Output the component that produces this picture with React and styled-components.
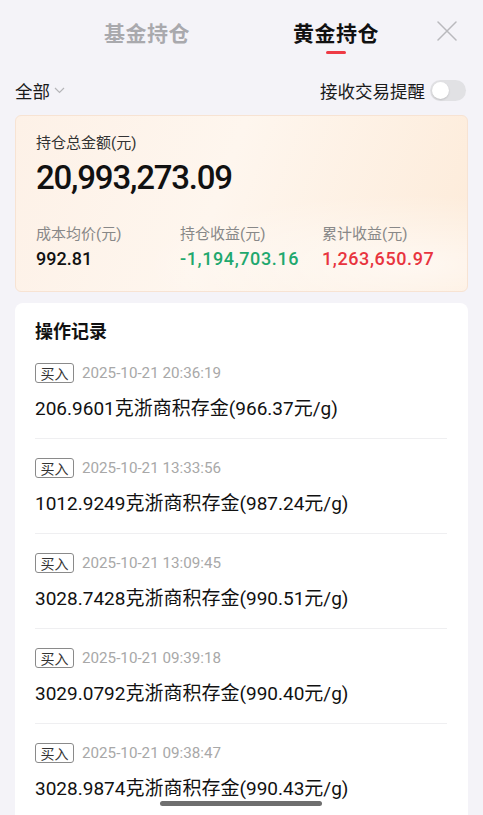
import React from "react";
import styled, { createGlobalStyle } from "styled-components";

const GlobalStyle = createGlobalStyle`
  html, body {
    margin: 0;
    padding: 0;
    background: #f4f3f8;
    font-family: Roboto, "Noto Sans CJK SC", "Noto Sans", sans-serif;
  }
`;

const Page = styled.div`
  width: 483px;
  height: 815px;
  overflow: hidden;
  position: relative;
  background: #f4f3f8;
  box-sizing: border-box;
  padding: 0 15px;
`;

const TabBar = styled.div`
  height: 66px;
  display: flex;
  justify-content: center;
  align-items: flex-start;
  padding-top: 19px;
  box-sizing: border-box;
  position: relative;
`;

const Tab = styled.div`
  width: 189px;
  display: flex;
  flex-direction: column;
  align-items: center;
  font-size: 21px;
  line-height: 30px;
  font-weight: 700;
  letter-spacing: 0.5px;
  color: ${(p) => (p.$active ? "#111" : "#a9a9ad")};

  &::after {
    content: "";
    width: 20px;
    height: 3px;
    margin-top: 2px;
    border-radius: 2px;
    background: ${(p) => (p.$active ? "#ee3a45" : "transparent")};
  }
`;

const Close = styled.div`
  position: absolute;
  right: 11px;
  top: 21px;
  width: 20px;
  height: 20px;
`;

const FilterRow = styled.div`
  height: 49px;
  display: flex;
  align-items: center;
  justify-content: space-between;
`;

const Select = styled.div`
  display: flex;
  align-items: center;
  gap: 4px;
  font-size: 17.5px;
  color: #1a1a1a;
`;

const Remind = styled.div`
  display: flex;
  align-items: center;
  gap: 5px;
  font-size: 17.5px;
  color: #1a1a1a;
  margin-right: 2px;
`;

const Toggle = styled.div`
  width: 36px;
  height: 21px;
  border-radius: 11px;
  background: #e1e1e4;
  position: relative;

  &::after {
    content: "";
    position: absolute;
    left: 2px;
    top: 2px;
    width: 17px;
    height: 17px;
    border-radius: 50%;
    background: #fff;
    box-shadow: 0 1px 2px rgba(0, 0, 0, 0.15);
  }
`;

const SummaryCard = styled.div`
  height: 177px;
  box-sizing: border-box;
  border-radius: 6px;
  border: 1px solid #f7e3d3;
  background:
    radial-gradient(ellipse 60% 40% at 88% 85%, rgba(255, 255, 255, 0.6) 0%, rgba(255, 255, 255, 0) 100%),
    linear-gradient(110deg, #fdf1e7 0%, #fef6ee 45%, #fdebd9 100%);
  padding: 17px 20px 0;
`;

const SmallLabel = styled.div`
  font-size: 15px;
  color: ${(p) => (p.$muted ? "#888" : "#333")};
  line-height: 20px;
`;

const BigAmount = styled.div`
  font-size: 33px;
  font-weight: 500;
  color: #111;
  letter-spacing: -1.2px;
  line-height: 40px;
  margin-top: 5px;
`;

const StatsRow = styled.div`
  display: grid;
  grid-template-columns: 144px 142px 1fr;
  margin-top: 26px;
`;

const Stat = styled.div`
  display: flex;
  flex-direction: column;
  gap: 3px;
`;

const StatValue = styled.div`
  font-size: 18px;
  font-weight: 500;
  line-height: 24px;
  letter-spacing: ${(p) => (p.$tight ? "0.6px" : "0")};
  color: ${(p) => p.$color || "#111"};
`;

const RecordsCard = styled.div`
  margin-top: 11px;
  background: #fff;
  border-radius: 8px 8px 0 0;
  padding: 17px 20px 0;
  height: 520px;
  box-sizing: border-box;
`;

const RecordsTitle = styled.div`
  font-size: 18px;
  font-weight: 700;
  color: #111;
  line-height: 24px;
`;

const Record = styled.div`
  padding: 18.5px 0 16.5px;
  border-bottom: 1px solid #efeff1;
  margin-right: 1px;
  &:first-of-type {
    padding-top: 17px;
  }
`;

const MetaLine = styled.div`
  display: flex;
  align-items: center;
  gap: 8px;
  height: 20px;
`;

const Tag = styled.span`
  display: inline-flex;
  align-items: center;
  justify-content: center;
  width: 39px;
  height: 20px;
  box-sizing: border-box;
  border: 1px solid #8a8a8a;
  border-radius: 3px;
  font-size: 14px;
  color: #333;
`;

const Time = styled.span`
  font-size: 15.2px;
  color: #a8a8a8;
`;

const RecordText = styled.div`
  margin-top: 13px;
  font-size: 19px;
  color: #111;
  line-height: 26px;
`;

const HomeBar = styled.div`
  position: absolute;
  left: 160px;
  bottom: 9px;
  width: 162px;
  height: 5px;
  border-radius: 3px;
  background: #6f6f6f;
`;

const records = [
  ["2025-10-21 20:36:19", "206.9601", "966.37"],
  ["2025-10-21 13:33:56", "1012.9249", "987.24"],
  ["2025-10-21 13:09:45", "3028.7428", "990.51"],
  ["2025-10-21 09:39:18", "3029.0792", "990.40"],
  ["2025-10-21 09:38:47", "3028.9874", "990.43"],
];

export default function App() {
  return (
    <>
      <GlobalStyle />
      <Page>
        <TabBar>
          <Tab>基金持仓</Tab>
          <Tab $active>黄金持仓</Tab>
          <Close>
            <svg width="20" height="20" viewBox="0 0 20 20">
              <path d="M1 1 L19 19 M19 1 L1 19" stroke="#b9b9bd" strokeWidth="1.5" strokeLinecap="round" />
            </svg>
          </Close>
        </TabBar>

        <FilterRow>
          <Select>
            全部
            <svg width="11" height="7" viewBox="0 0 11 7">
              <path d="M1 1 L5.5 5.5 L10 1" fill="none" stroke="#b5b5b8" strokeWidth="1.2" />
            </svg>
          </Select>
          <Remind>
            接收交易提醒
            <Toggle />
          </Remind>
        </FilterRow>

        <SummaryCard>
          <SmallLabel>持仓总金额(元)</SmallLabel>
          <BigAmount>20,993,273.09</BigAmount>
          <StatsRow>
            <Stat>
              <SmallLabel $muted>成本均价(元)</SmallLabel>
              <StatValue>992.81</StatValue>
            </Stat>
            <Stat>
              <SmallLabel $muted>持仓收益(元)</SmallLabel>
              <StatValue $color="#1fa86e" $tight>-1,194,703.16</StatValue>
            </Stat>
            <Stat>
              <SmallLabel $muted>累计收益(元)</SmallLabel>
              <StatValue $color="#e8343e" $tight>1,263,650.97</StatValue>
            </Stat>
          </StatsRow>
        </SummaryCard>

        <RecordsCard>
          <RecordsTitle>操作记录</RecordsTitle>
          {records.map(([time, grams, price]) => (
            <Record key={time}>
              <MetaLine>
                <Tag>买入</Tag>
                <Time>{time}</Time>
              </MetaLine>
              <RecordText>
                {grams}克浙商积存金({price}元/g)
              </RecordText>
            </Record>
          ))}
        </RecordsCard>

        <HomeBar />
      </Page>
    </>
  );
}
